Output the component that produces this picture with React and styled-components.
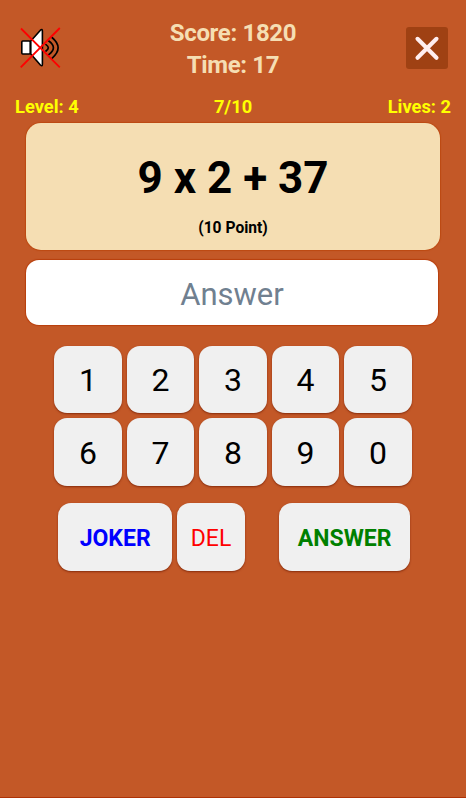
import React, { useState } from "react"
import styled, { createGlobalStyle } from "styled-components"

const GlobalStyle = createGlobalStyle`
    * {
        box-sizing: border-box;
    }

    body {
        margin: 0;
        background: #fff;
        font-family: Roboto, "Liberation Sans", sans-serif;
    }

    button,
    input {
        font-family: inherit;
    }
`

const Screen = styled.div`
    display: flex;
    flex-direction: column;
    height: 798px;
    background: #c35827;
    border-bottom: 1px solid #ae3206;
`

const Header = styled.header`
    display: flex;
    justify-content: space-between;
    height: 94px;
    padding: 0 18px 0 19px;

    .totals {
        padding: 18px 1px 0 0;
        color: #f5deb3;
        font-size: 24px;
        font-weight: 700;
        letter-spacing: -0.35px;
        line-height: 31.5px;
        text-align: center;
    }
`

const IconButton = styled.button`
    display: flex;
    align-items: center;
    justify-content: center;
    width: ${(p) => p.$size}px;
    height: ${(p) => p.$size}px;
    margin-top: 27px;
    padding: 0;
    border: 0;
    border-radius: 3px;
    background: ${(p) => p.$bg || "none"};
`

const Status = styled.div`
    display: grid;
    grid-template-columns: 1fr auto 1fr;
    height: 29px;
    padding: 0 15px;
    color: #ff0;
    font-size: 18.3px;
    font-weight: 700;
    line-height: 25px;

    span:last-child {
        text-align: right;
    }
`

const Question = styled.section`
    height: 127px;
    margin: 0 26px;
    padding-top: 25px;
    border-radius: 15px;
    background: #f5deb3;
    box-shadow: 0 0 1px 1px #bd4a12;
    color: #000;
    font-weight: 700;
    text-align: center;

    .task {
        font-size: 44px;
        line-height: 60px;
    }

    .points {
        font-size: 15.6px;
        line-height: 40px;
    }
`

const AnswerInput = styled.input`
    width: 412px;
    height: 65px;
    margin: 10px 0 0 26px;
    padding: 3px 0 0;
    border: 0;
    border-radius: 13px;
    background: #fff;
    box-shadow: 0 0 1px 1px #b93f0c;
    font-size: 31px;
    text-align: center;
    outline: none;

    &::placeholder {
        color: #708090;
        opacity: 1;
    }
`

const Keypad = styled.div`
    display: grid;
    grid-template-columns: repeat(5, 67.5px);
    gap: 5px;
    margin: 20.5px 0 0 54.3px;
`

const Actions = styled.div`
    display: flex;
    gap: 5px;
    margin: 17.5px 0 0 58px;
`

const Key = styled.button`
    width: ${(p) => p.$width || 67.5}px;
    height: 67.5px;
    margin-left: ${(p) => p.$offset || 0}px;
    padding: 2px 0 0;
    border: 0;
    border-radius: 13px;
    background: #f0f0f0;
    box-shadow: 0 1px 2px rgba(110, 25, 0, 0.7);
    color: #000;
    font-size: 32px;
`

const ActionKey = styled(Key)`
    padding-top: 3px;
    color: ${(p) => p.$color};
    font-size: 23px;
    font-weight: ${(p) => (p.$bold ? 700 : 400)};
`

const SoundOff = () => (
    <svg width="41" height="42" viewBox="1 0 41 42">
        <g fill="#fff" stroke="#000" strokeWidth="1.6" strokeLinejoin="round">
            <rect x="2.8" y="14" width="8.4" height="13" rx="1" />
            <path d="M11.8 14 21.4 3.2q2-1.7 2 .7v33.4q0 2.4-2 .7L11.8 27Z" />
        </g>
        <g fill="none" stroke="#000" strokeWidth="1.7" strokeLinecap="round">
            <path d="M27 17.6q4.6 3.2 0 6.4" />
            <path d="M29.8 14q9.2 6.8 0 13.6" />
            <path d="M33 10.5q12.2 10.3 0 20.8" />
        </g>
        <path
            d="M2 1.5 40.8 40.3M40.8 1 1.7 40.3"
            stroke="red"
            strokeWidth="1.8"
        />
    </svg>
)

const Cross = () => (
    <svg width="42" height="42" viewBox="0 0 42 42">
        <path
            d="m11.5 11.8 19 19M30.5 11.8l-19 19"
            stroke="#ffeef0"
            strokeWidth="4.1"
            strokeLinecap="round"
        />
    </svg>
)

const digits = ["1", "2", "3", "4", "5", "6", "7", "8", "9", "0"]

export default function App() {
    const [value, setValue] = useState("")

    return (
        <>
            <GlobalStyle />
            <Screen>
                <Header>
                    <IconButton $size={42}>
                        <SoundOff />
                    </IconButton>
                    <div className="totals">
                        <div>Score: 1820</div>
                        <div>Time: 17</div>
                    </div>
                    <IconButton $size={42} $bg="#9f4113">
                        <Cross />
                    </IconButton>
                </Header>

                <Status>
                    <span>Level: 4</span>
                    <span>7/10</span>
                    <span>Lives: 2</span>
                </Status>

                <Question>
                    <div className="task">9 x 2 + 37</div>
                    <div className="points">(10 Point)</div>
                </Question>

                <AnswerInput placeholder="Answer" value={value} readOnly />

                <Keypad>
                    {digits.map((d) => (
                        <Key key={d} onClick={() => setValue(value + d)}>
                            {d}
                        </Key>
                    ))}
                </Keypad>

                <Actions>
                    <ActionKey $width={114.3} $color="#00f" $bold>
                        JOKER
                    </ActionKey>
                    <ActionKey
                        $color="#f00"
                        onClick={() => setValue(value.slice(0, -1))}
                    >
                        DEL
                    </ActionKey>
                    <ActionKey
                        $width={130.5}
                        $offset={29.6}
                        $color="#008000"
                        $bold
                    >
                        ANSWER
                    </ActionKey>
                </Actions>
            </Screen>
        </>
    )
}
